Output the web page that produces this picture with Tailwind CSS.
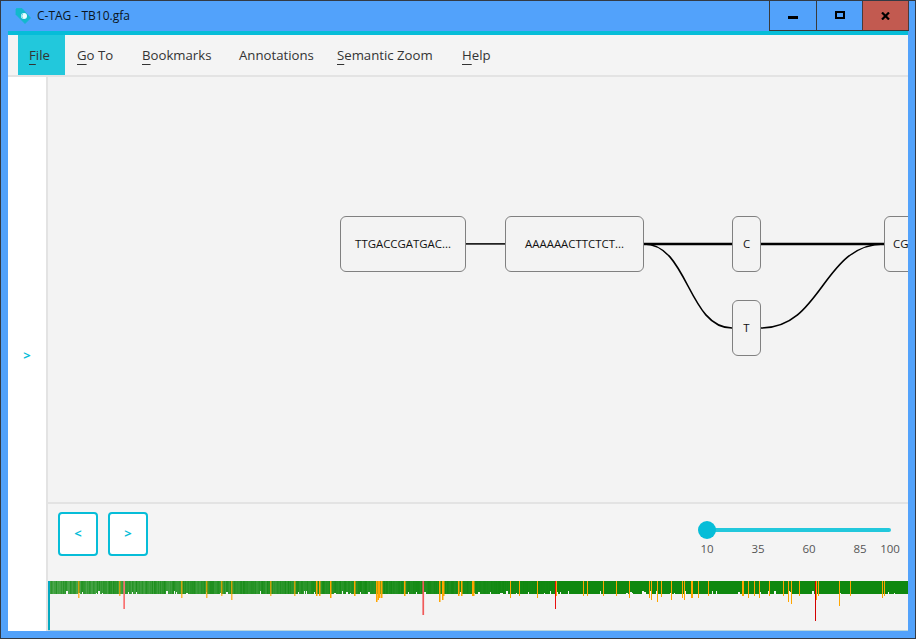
<!DOCTYPE html>
<html lang="en">

<head>
    <meta charset="UTF-8">
    <title>C-TAG - TB10.gfa</title>
    <script src="https://cdn.jsdelivr.net/npm/@tailwindcss/browser@4"></script>
</head>

<body class="bg-[#52a2fb] font-['Open_Sans',sans-serif] overflow-hidden">
    <div class="w-[916px] h-[639px] flex flex-col border border-[#333a44] bg-[#52a2fb] overflow-hidden">

        <!-- Title bar -->
        <div class="h-[30px] flex items-stretch shrink-0">
            <div class="flex-1 flex items-center pl-[14px] gap-[6px] pb-[1px]">
                <svg class="w-[16px] h-[16px]" viewBox="0 0 16 16">
                    <path d="M1.5 0.5 H7 L15.5 10 L10 15.5 L1 6.5 V1 Z" fill="#12b9cc" stroke="#12b9cc" stroke-width="0.8" stroke-linejoin="round" />
                    <circle cx="9" cy="8" r="3" fill="#eafcff" />
                    <path d="M8.5 5.2 a3 3 0 0 0 0 5.6 a4 4 0 0 1 0 -5.6 z" fill="#12b9cc" />
                </svg>
                <span class="text-[12px] text-[#0b1420]">C-TAG - TB10.gfa</span>
            </div>
            <div class="flex mr-[6px] border-b border-[#3a3a3a] h-[30px]">
                <div class="w-[47px] border-l border-[#3a3a3a] flex items-center justify-center">
                    <div class="w-[10px] h-[3px] bg-black mt-[4px]"></div>
                </div>
                <div class="w-[46px] border-l border-[#3a3a3a] flex items-center justify-center">
                    <div class="w-[10px] h-[8px] border-2 border-black mb-[1px]"></div>
                </div>
                <div class="w-[47px] border-x border-[#4a3a3a] bg-[#c25a50] flex items-center justify-center">
                    <svg class="w-[9px] h-[8px]" viewBox="0 0 9 8">
                        <path d="M1 0.5 L8 7.5 M8 0.5 L1 7.5" stroke="black" stroke-width="2.2" />
                    </svg>
                </div>
            </div>
        </div>

        <!-- Window content -->
        <div class="mx-[7px] w-[900px] h-[600px] border-t-4 border-[#06bdd8] bg-[#f4f4f4] flex flex-col">

            <!-- Menu -->
            <div class="h-[42px] shrink-0 flex pl-[10px] border-b-2 border-[#e3e3e3] text-[13.2px] text-[#333] whitespace-nowrap">
                <div class="w-[47px] h-[40px] bg-[#22c8dc] flex items-center pl-[11px] pt-[2px]"><span><span class="underline underline-offset-[4px]">F</span>ile</span></div>
                <div class="ml-[12px] w-[37px] flex items-center pt-[2px]"><span><span class="underline underline-offset-[4px]">G</span>o To</span></div>
                <div class="ml-[28px] w-[69px] flex items-center pt-[2px]"><span><span class="underline underline-offset-[4px]">B</span>ookmarks</span></div>
                <div class="ml-[28px] w-[75px] flex items-center pt-[2px]"><span>Annotations</span></div>
                <div class="ml-[23px] w-[97px] flex items-center pt-[2px]"><span><span class="underline underline-offset-[4px]">S</span>emantic Zoom</span></div>
                <div class="ml-[28px] flex items-center pt-[2px]"><span><span class="underline underline-offset-[4px]">H</span>elp</span></div>
            </div>

            <div class="flex-1 flex min-h-0">
                <!-- Collapsed side panel -->
                <div class="w-[40px] shrink-0 bg-white border-r-2 border-[#e3e3e3] flex items-center justify-center pt-[3px]">
                    <span class="text-[13px] font-bold text-[#06bdd8]">&gt;</span>
                </div>

                <div class="flex-1 flex flex-col min-w-0">
                    <!-- Graph canvas -->
                    <div class="relative h-[427px] shrink-0 overflow-hidden bg-[#f3f3f3] border-b-2 border-[#e3e3e3]">
                        <svg class="absolute left-0 top-0" width="860" height="425" viewBox="48 77 860 425" fill="none">
                            <path d="M465 243.8 H505" stroke="#222" stroke-width="1.8" />
                            <path d="M644 244 H732 M761 244 H884" stroke="#000" stroke-width="2.6" />
                            <path d="M644 244 C688 244 688 328 732 328" stroke="#000" stroke-width="1.6" />
                            <path d="M761 328 C822.5 328 822.5 244 884 244" stroke="#000" stroke-width="1.6" />
                        </svg>
                        <div class="absolute left-[292px] top-[139px] w-[126px] h-[56px] rounded-[6px] border border-[#808080] bg-[#f3f3f3] flex items-center justify-center text-[11.4px] text-[#111]">TTGACCGATGAC...</div>
                        <div class="absolute left-[457px] top-[139px] w-[139px] h-[56px] rounded-[6px] border border-[#808080] bg-[#f3f3f3] flex items-center justify-center text-[11.4px] text-[#111]">AAAAAACTTCTCT...</div>
                        <div class="absolute left-[684px] top-[139px] w-[29px] h-[56px] rounded-[6px] border border-[#808080] bg-[#f3f3f3] flex items-center justify-center text-[11.4px] text-[#111]">C</div>
                        <div class="absolute left-[684px] top-[223px] w-[29px] h-[56px] rounded-[6px] border border-[#808080] bg-[#f3f3f3] flex items-center justify-center text-[11.4px] text-[#111]">T</div>
                        <div class="absolute left-[836px] top-[139px] w-[60px] h-[56px] rounded-[6px] border border-[#808080] bg-[#f3f3f3] flex items-center pl-[8px] text-[11.4px] text-[#111]">CG</div>
                    </div>

                    <!-- Controls -->
                    <div class="h-[77px] shrink-0 flex justify-between pl-[10px] pt-[8px] bg-[#f4f4f4]">
                        <div class="flex gap-[10px] items-start">
                            <button class="w-[40px] h-[44px] bg-white border-2 border-[#06bdd8] rounded-[4px] text-[13px] font-bold text-[#06bdd8]">&lt;</button>
                            <button class="w-[40px] h-[44px] bg-white border-2 border-[#06bdd8] rounded-[4px] text-[13px] font-bold text-[#06bdd8]">&gt;</button>
                        </div>
                        <div class="w-[210px] pt-[9px]">
                            <div class="relative h-[18px] w-[193px] flex items-center">
                                <div class="ml-[9px] h-[4px] w-[184px] rounded-full bg-[#22c8dc]"></div>
                                <div class="absolute left-0 top-0 w-[18px] h-[18px] rounded-full bg-[#06bdd8]"></div>
                            </div>
                            <div class="flex text-[11.5px] text-[#555] mt-[1px] -ml-[16.5px]">
                                <span class="w-[51px] text-center">10</span>
                                <span class="w-[51px] text-center">35</span>
                                <span class="w-[51px] text-center">60</span>
                                <span class="w-[51px] text-center">85</span>
                                <span class="w-[9px] flex justify-center">100</span>
                            </div>
                        </div>
                    </div>

                    <!-- Minimap -->
                    <div class="flex-1 bg-[#f3f3f3] border-b border-[#b9d6dc] min-h-0 overflow-hidden">
                        <svg id="minimap" class="block" width="860" height="49" viewBox="48 581 860 49"></svg>
                    </div>
                </div>
            </div>
        </div>
    </div>

    <script>
        // [x, bottom y] of the marks read off the overview strip
        const orange = [[78, 598], [119, 596], [181, 598], [206, 598], [221, 596], [231, 600], [270, 596], [294, 596],
            [316, 596], [319, 596], [330, 598], [354, 596], [376, 602], [377.5, 600], [379, 598], [381, 598], [404, 596],
            [439, 602], [442, 600], [443, 596], [458, 596], [461, 596], [472, 596], [473, 596], [510, 598], [519, 596],
            [537, 598], [556, 596], [583, 596], [587, 596], [603, 596], [616, 596], [629, 598], [649, 598], [651, 600],
            [657, 602], [661, 597], [671, 600], [682, 598], [684, 600], [691, 598], [692, 598], [698, 598], [708, 596],
            [742, 596], [743, 596], [748, 598], [754, 596], [759, 598], [769, 596], [783, 596], [788, 602], [791, 604],
            [799, 596], [816, 600], [818, 596], [839, 606], [850, 596], [882, 598], [884, 596]];
        const red = [[123.3, 609, 1.7, '#f87171'], [422.4, 615, 1.7, '#f05a5a'], [555, 609, 1, '#e81010'], [815, 621, 1, '#d40000']];

        // small pseudo random sequence so the strip looks the same each load
        let seed = 12345;
        function rnd() {
            seed = (seed * 1103515245 + 12345) % 2147483648;
            return seed / 2147483648;
        }

        let marks = '<rect x="48" y="581" width="2" height="49" fill="#06a9c0"/>';
        marks += '<rect x="50" y="581" width="858" height="13" fill="#0f880f"/>';
        // lighter streaks, stronger toward the left of the strip
        for (let x = 50; x < 908; x++) {
            const fade = Math.max(0, 0.2 - (x - 50) / 2600);
            marks += `<rect x="${x}" y="581" width="1" height="13" fill="#fff" opacity="${(fade * (0.35 + rnd())).toFixed(3)}"/>`;
        }
        // notches that cut the bottom edge of the green band
        for (let x = 54; x < 906; x += 2) {
            if (rnd() < 0.16) {
                const h = 1 + Math.floor(rnd() * 3);
                marks += `<rect x="${x}" y="${594 - h}" width="${rnd() < 0.25 ? 2 : 1}" height="${h}" fill="#f8f8f8"/>`;
            }
        }
        orange.forEach(([x, y]) => {
            marks += `<rect x="${x}" y="581" width="${x < 500 ? 1.5 : 1}" height="${y - 581}" fill="#ffa500" opacity="${x < 300 ? 0.75 : 1}"/>`;
        });
        red.forEach(([x, y, w, color]) => {
            marks += `<rect x="${x}" y="581" width="${w}" height="${y - 581}" fill="${color}"/>`;
        });
        document.getElementById('minimap').innerHTML = marks;
    </script>
</body>

</html>
